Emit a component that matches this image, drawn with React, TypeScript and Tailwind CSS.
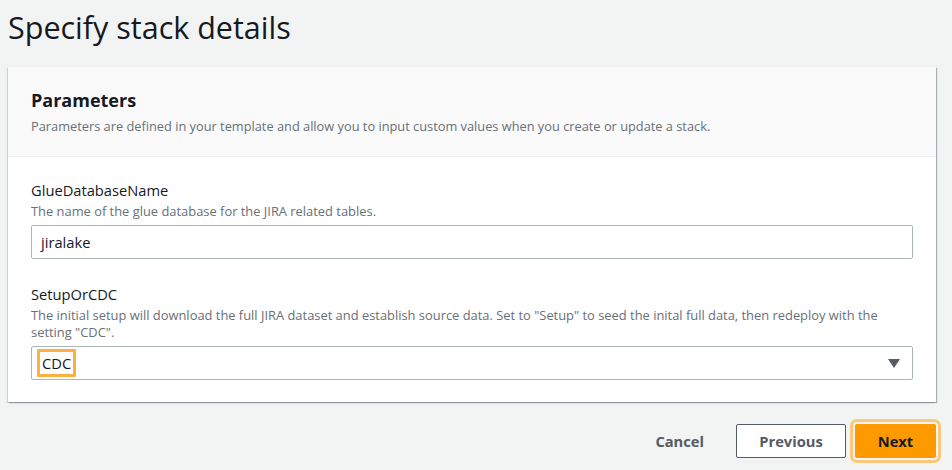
const FONT = "font-['Open_Sans','Noto_Sans',sans-serif]";

function Field({
  label,
  description,
  children,
}: {
  label: string;
  description: string;
  children: React.ReactNode;
}) {
  return (
    <div className="flex flex-col">
      <div className="text-[14.7px] leading-[20px] text-[#16191f]">{label}</div>
      <div className="mt-[3px] text-[12.9px] leading-[17px] text-[#687078]">{description}</div>
      <div className="mt-[5px]">{children}</div>
    </div>
  );
}

export default function App() {
  return (
    <div className={`${FONT} h-[470px] w-[952px] overflow-hidden bg-[#f2f3f3] pl-[8px] pr-[16px]`}>
      <h1 className="pt-[7px] text-[30.5px] leading-[40px] text-[#16191f]">Specify stack details</h1>

      <section className="mt-[20px] w-[928px] bg-white shadow-[1px_1px_1px_0_rgba(0,28,36,0.3),-1px_1px_1px_0_rgba(0,28,36,0.15)]">
        <div className="border-b border-[#eaeded] bg-[#fafafa] px-[23px] pb-[21px] pt-[21px]">
          <h2 className="text-[18px] font-bold leading-[24px] text-[#16191f]">Parameters</h2>
          <p className="mt-[5px] text-[12.8px] leading-[18px] text-[#687078]">
            Parameters are defined in your template and allow you to input custom values when you create or update a stack.
          </p>
        </div>

        <div className="flex flex-col gap-[25px] px-[23px] pb-[22px] pt-[23px]">
          <Field label="GlueDatabaseName" description="The name of the glue database for the JIRA related tables.">
            <div className="flex h-[34px] items-center rounded-[2px] border border-[#aab7b8] px-[9px] text-[14.7px] text-[#16191f]">
              jiralake
            </div>
          </Field>

          <Field
            label="SetupOrCDC"
            description={'The initial setup will download the full JIRA dataset and establish source data. Set to "Setup" to seed the inital full data, then redeploy with the setting "CDC".'}
          >
            <div className="flex h-[34px] items-center justify-between rounded-[2px] border border-[#aab7b8] pl-[5px] pr-[12px] text-[14.7px] text-[#16191f]">
              <span className="rounded-[1px] border-[3px] border-[#fbb041] px-[2px] leading-[22px]">CDC</span>
              <svg width="12" height="9" viewBox="0 0 12 9" aria-hidden="true">
                <path d="M0 0 H12 L6 9 Z" fill="#545b64" />
              </svg>
            </div>
          </Field>
        </div>
      </section>

      <div className="mt-[22px] flex items-center justify-end">
        <button className="mr-[32px] text-[14.7px] font-bold text-[#545b64]">Cancel</button>
        <button className="mr-[9px] h-[34px] w-[110px] rounded-[2px] border border-[#545b64] bg-white text-[14.7px] font-bold text-[#545b64]">
          Previous
        </button>
        <button className="h-[34px] w-[81px] rounded-[2px] bg-[#ff9900] text-[14.7px] font-bold text-[#16191f] outline-[3px] outline-offset-[2px] outline-[#fcc77a] outline-solid">
          Next
        </button>
      </div>
    </div>
  );
}
